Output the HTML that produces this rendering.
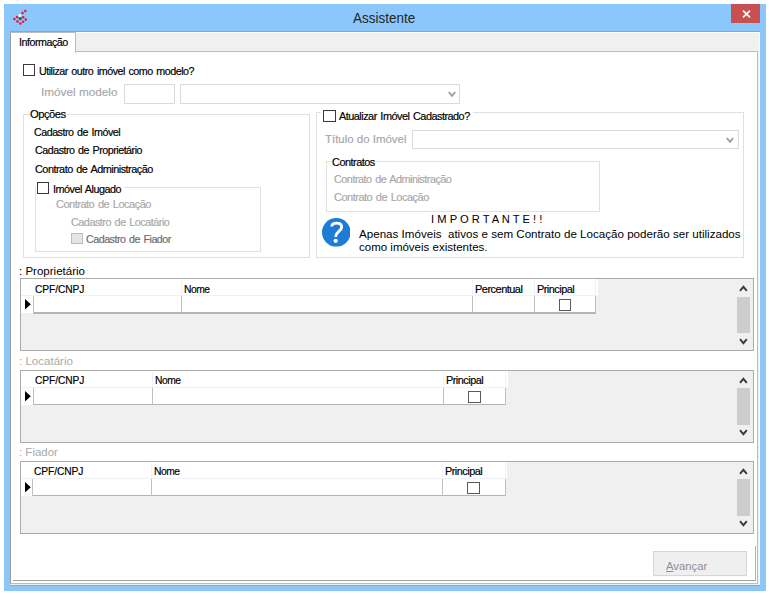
<!DOCTYPE html>
<html><head><meta charset="utf-8"><title>Assistente</title>
<style>
*{box-sizing:border-box;margin:0;padding:0}
html,body{width:771px;height:599px;background:#fff;overflow:hidden}
body{position:relative;font-family:"Liberation Sans",sans-serif;font-size:11px;color:#000}
.a{position:absolute}
.t{position:absolute;white-space:nowrap;transform-origin:0 50%}
.cb{position:absolute;width:12.3px;height:12.3px;border:1px solid #3a3a3a;background:#fff}
.grp{position:absolute;border:1px solid #e0e0e0}
.grid{position:absolute;border:1.2px solid #ababab;background:#f0f0f0}
u{text-decoration:underline}
</style></head><body>
<div class="a" style="left:4px;top:4px;width:762.2px;height:587.2px;background:#8cc7fb"></div>
<div class="a" style="left:731px;top:4px;width:29px;height:18.8px;background:#c75050"></div>
<svg class="a" style="left:741.7px;top:9.8px" width="9" height="8" viewBox="0 0 9 8"><path d="M1 0.6L8 7.4M8 0.6L1 7.4" stroke="#fff" stroke-width="1.7"/></svg>
<svg class="a" style="left:10px;top:9px" width="18" height="17" viewBox="0 0 18 17"><g fill="#ea1c2c"><circle cx="15.3" cy="2.0" r="1.3"/><circle cx="12.5" cy="4.0" r="1.3"/><circle cx="7.1" cy="8.1" r="1.3"/><circle cx="13.1" cy="8.2" r="1.3"/><circle cx="4.4" cy="10.1" r="1.3"/><circle cx="15.8" cy="10.6" r="1.3"/><circle cx="7.5" cy="12.4" r="1.3"/><circle cx="13.1" cy="12.7" r="1.3"/><circle cx="10.4" cy="14.5" r="1.3"/></g><circle cx="9.8" cy="6.4" r="1.5" fill="#fff"/><circle cx="10.2" cy="9.6" r="1.7" fill="#1f55a5"/></svg>
<div class="a" style="left:9.6px;top:31.4px;width:750.8px;height:554.2px;background:#7ea9da"></div>
<div class="a" style="left:10.4px;top:32.3px;width:749.3px;height:552.5px;background:#f0f0f0;border-top:1.7px solid #fff;border-right:1px solid #fff"></div>
<div class="a" style="left:10.2px;top:51.3px;width:748.3px;height:532.7px;background:#fff;border:1.2px solid #bcbcbc;border-left-color:#9c9c9c"></div>
<div class="a" style="left:13px;top:546px;width:743px;height:35px;border-right:1px solid #b0b0b0;border-bottom:1px solid #a0a0a0"></div>
<div class="a" style="left:10px;top:32px;width:66px;height:21px;background:#fff;border:1px solid #bcbcbc;border-left-color:#9c9c9c;border-bottom:none"></div>
<div class="cb" style="left:23.1px;top:63.9px;"></div>
<div class="a" style="left:124px;top:84px;width:51px;height:19.5px;border:1px solid #dadada;background:#fff"></div>
<div class="a" style="left:180px;top:84px;width:280px;height:19.5px;border:1px solid #dadada;background:#fff"></div>
<svg class="a" style="left:447.7px;top:91px" width="8" height="7" viewBox="0 0 8 7"><path d="M0.8 1L4 4.8L7.2 1" stroke="#9c9c9c" stroke-width="1.8" fill="none"/></svg>
<div class="grp" style="left:23px;top:114px;width:287px;height:144px"></div>
<div class="grp" style="left:34.5px;top:186.5px;width:226px;height:65px"></div>
<div class="a" style="left:36px;top:181px;width:88px;height:14px;background:#fff"></div>
<div class="cb" style="left:37px;top:182px;"></div>
<div class="cb" style="left:71.2px;top:232.8px;width:11.5px;height:11.5px;border-color:#bdbdbd;background:#e4e4e4;"></div>
<div class="grp" style="left:316px;top:112.3px;width:427.7px;height:145.9px"></div>
<div class="a" style="left:321px;top:108px;width:152px;height:14px;background:#fff"></div>
<div class="cb" style="left:323.3px;top:110px;width:12.3px;height:12px;"></div>
<div class="a" style="left:412px;top:130.2px;width:326.5px;height:19px;border:1px solid #dadada;background:#fff"></div>
<svg class="a" style="left:726.4px;top:136.7px" width="8" height="7" viewBox="0 0 8 7"><path d="M0.8 1L4 4.8L7.2 1" stroke="#9c9c9c" stroke-width="1.8" fill="none"/></svg>
<div class="grp" style="left:325.5px;top:161.3px;width:274px;height:51px"></div>
<svg class="a" style="left:321.5px;top:218.2px" width="28.6" height="28.6" viewBox="0 0 28 28"><circle cx="14" cy="14" r="14" fill="#1e7cd6"/><path d="M9.6 8.4C9.6 5.8 11.8 4.9 14.2 4.9C17.2 4.9 19.3 6.4 19.3 8.8C19.3 10.9 17.9 12 16.2 13.4C14.4 14.9 13.5 16 13.3 18.4" stroke="#fff" stroke-width="2.7" fill="none"/><circle cx="13.4" cy="22.3" r="2.1" fill="#fff"/></svg>
<div class="grid" style="left:20px;top:278.4px;width:734px;height:73px"></div><div class="a" style="left:21.0px;top:279.4px;width:576.8px;height:17px;background:#fff;border-bottom:1px solid #eef1f5"></div><div class="a" style="left:21.0px;top:296.4px;width:575.3px;height:17px;background:#fff"></div><div class="a" style="left:32.5px;top:312.4px;width:563.8px;height:1.2px;background:#b4b4b4"></div><div class="a" style="left:32.5px;top:296.4px;width:1.2px;height:17px;background:#c0c0c0"></div><div class="a" style="left:180.6px;top:280.4px;width:1px;height:15px;background:#eef1f5"></div><div class="a" style="left:180.6px;top:296.4px;width:1.2px;height:17px;background:#c0c0c0"></div><div class="a" style="left:471.5px;top:280.4px;width:1px;height:15px;background:#eef1f5"></div><div class="a" style="left:471.5px;top:296.4px;width:1.2px;height:17px;background:#c0c0c0"></div><div class="a" style="left:533.8px;top:280.4px;width:1px;height:15px;background:#eef1f5"></div><div class="a" style="left:533.8px;top:296.4px;width:1.2px;height:17px;background:#c0c0c0"></div><div class="a" style="left:595.3px;top:280.4px;width:1px;height:15px;background:#eef1f5"></div><div class="a" style="left:595.3px;top:296.4px;width:1.2px;height:17px;background:#c0c0c0"></div><svg class="a" style="left:25.0px;top:299.2px" width="6" height="10.5" viewBox="0 0 6 10.5"><path d="M0 0L5.8 5.25L0 10.5Z" fill="#000"/></svg><div class="cb" style="left:558.8499999999999px;top:299.0px;width:12.5px;height:12.3px;border-color:#5a5a5a"></div><div class="a" style="left:737.2px;top:296.59999999999997px;width:13px;height:36.4px;background:#cdcdcd"></div><svg class="a" style="left:739.2px;top:285.0px" width="9" height="7" viewBox="0 0 9 7"><path d="M1 5.8L4.4 1.8L7.8 5.8" stroke="#3a3a3a" stroke-width="1.9" fill="none"/></svg><svg class="a" style="left:739.2px;top:337.79999999999995px" width="9" height="7" viewBox="0 0 9 7"><path d="M1 1.2L4.4 5.2L7.8 1.2" stroke="#3a3a3a" stroke-width="1.9" fill="none"/></svg>
<div class="grid" style="left:20px;top:370px;width:734px;height:73px"></div><div class="a" style="left:21.0px;top:371px;width:486.5px;height:17px;background:#fff;border-bottom:1px solid #eef1f5"></div><div class="a" style="left:21.0px;top:388px;width:485.0px;height:17px;background:#fff"></div><div class="a" style="left:32.5px;top:404px;width:473.5px;height:1.2px;background:#b4b4b4"></div><div class="a" style="left:32.5px;top:388px;width:1.2px;height:17px;background:#c0c0c0"></div><div class="a" style="left:152.3px;top:372px;width:1px;height:15px;background:#eef1f5"></div><div class="a" style="left:152.3px;top:388px;width:1.2px;height:17px;background:#c0c0c0"></div><div class="a" style="left:443px;top:372px;width:1px;height:15px;background:#eef1f5"></div><div class="a" style="left:443px;top:388px;width:1.2px;height:17px;background:#c0c0c0"></div><div class="a" style="left:505px;top:372px;width:1px;height:15px;background:#eef1f5"></div><div class="a" style="left:505px;top:388px;width:1.2px;height:17px;background:#c0c0c0"></div><svg class="a" style="left:25.0px;top:390.8px" width="6" height="10.5" viewBox="0 0 6 10.5"><path d="M0 0L5.8 5.25L0 10.5Z" fill="#000"/></svg><div class="cb" style="left:468.3px;top:390.6px;width:12.5px;height:12.3px;border-color:#5a5a5a"></div><div class="a" style="left:737.2px;top:388.2px;width:13px;height:36.4px;background:#cdcdcd"></div><svg class="a" style="left:739.2px;top:376.6px" width="9" height="7" viewBox="0 0 9 7"><path d="M1 5.8L4.4 1.8L7.8 5.8" stroke="#3a3a3a" stroke-width="1.9" fill="none"/></svg><svg class="a" style="left:739.2px;top:429.4px" width="9" height="7" viewBox="0 0 9 7"><path d="M1 1.2L4.4 5.2L7.8 1.2" stroke="#3a3a3a" stroke-width="1.9" fill="none"/></svg>
<div class="grid" style="left:19.5px;top:461px;width:734px;height:73px"></div><div class="a" style="left:20.5px;top:462px;width:486.5px;height:17px;background:#fff;border-bottom:1px solid #eef1f5"></div><div class="a" style="left:20.5px;top:479px;width:485.0px;height:17px;background:#fff"></div><div class="a" style="left:32px;top:495px;width:473.5px;height:1.2px;background:#b4b4b4"></div><div class="a" style="left:32px;top:479px;width:1.2px;height:17px;background:#c0c0c0"></div><div class="a" style="left:151px;top:463px;width:1px;height:15px;background:#eef1f5"></div><div class="a" style="left:151px;top:479px;width:1.2px;height:17px;background:#c0c0c0"></div><div class="a" style="left:441.8px;top:463px;width:1px;height:15px;background:#eef1f5"></div><div class="a" style="left:441.8px;top:479px;width:1.2px;height:17px;background:#c0c0c0"></div><div class="a" style="left:504.5px;top:463px;width:1px;height:15px;background:#eef1f5"></div><div class="a" style="left:504.5px;top:479px;width:1.2px;height:17px;background:#c0c0c0"></div><svg class="a" style="left:24.5px;top:481.8px" width="6" height="10.5" viewBox="0 0 6 10.5"><path d="M0 0L5.8 5.25L0 10.5Z" fill="#000"/></svg><div class="cb" style="left:467.45px;top:481.6px;width:12.5px;height:12.3px;border-color:#5a5a5a"></div><div class="a" style="left:737.2px;top:479.2px;width:13px;height:36.4px;background:#cdcdcd"></div><svg class="a" style="left:739.2px;top:467.6px" width="9" height="7" viewBox="0 0 9 7"><path d="M1 5.8L4.4 1.8L7.8 5.8" stroke="#3a3a3a" stroke-width="1.9" fill="none"/></svg><svg class="a" style="left:739.2px;top:520.4px" width="9" height="7" viewBox="0 0 9 7"><path d="M1 1.2L4.4 5.2L7.8 1.2" stroke="#3a3a3a" stroke-width="1.9" fill="none"/></svg>
<div class="a" style="left:653px;top:551px;width:94px;height:25px;background:#efefef;border:1px solid #d5d5d5"></div>
<div class="t" id="t0" style="left:353.3px;top:9.23px;font-size:15.5px;line-height:18px;height:18px;color:#262626;transform:scaleX(0.8697);">Assistente</div>
<div class="t" id="t1" style="left:18.5px;top:34.61px;font-size:11.8px;line-height:14px;height:14px;color:#000;transform:scaleX(0.9100);letter-spacing:-0.55px;word-spacing:1.2px;-webkit-text-stroke:0.2px;">Informação</div>
<div class="t" id="t2" style="left:38.5px;top:63.61px;font-size:11.8px;line-height:14px;height:14px;color:#000;transform:scaleX(0.9099);letter-spacing:-0.55px;word-spacing:1.2px;-webkit-text-stroke:0.2px;">Utilizar outro imóvel como modelo?</div>
<div class="t" id="t3" style="left:41.1px;top:85.18px;font-size:11.6px;line-height:14px;height:14px;color:#a6a6a6;transform:scaleX(1.0145);-webkit-text-stroke:0.15px;">Imóvel modelo</div>
<div class="t" id="t4" style="left:29.9px;top:107.21px;font-size:11.8px;line-height:14px;height:14px;color:#000;transform:scaleX(0.9502);letter-spacing:-0.55px;word-spacing:1.2px;-webkit-text-stroke:0.2px;background:#fff;">Opções</div>
<div class="t" id="t5" style="left:34.3px;top:124.51px;font-size:11.8px;line-height:14px;height:14px;color:#000;transform:scaleX(0.9083);letter-spacing:-0.55px;word-spacing:1.2px;-webkit-text-stroke:0.2px;">Cadastro de Imóvel</div>
<div class="t" id="t6" style="left:35.0px;top:142.71px;font-size:11.8px;line-height:14px;height:14px;color:#000;transform:scaleX(0.9088);letter-spacing:-0.55px;word-spacing:1.2px;-webkit-text-stroke:0.2px;">Cadastro de Proprietário</div>
<div class="t" id="t7" style="left:35.0px;top:161.81px;font-size:11.8px;line-height:14px;height:14px;color:#000;transform:scaleX(0.9227);letter-spacing:-0.55px;word-spacing:1.2px;-webkit-text-stroke:0.2px;">Contrato de Administração</div>
<div class="t" id="t8" style="left:53.2px;top:181.71px;font-size:11.8px;line-height:14px;height:14px;color:#000;transform:scaleX(0.9168);letter-spacing:-0.55px;word-spacing:1.2px;-webkit-text-stroke:0.2px;">Imóvel Alugado</div>
<div class="t" id="t9" style="left:55.8px;top:197.31px;font-size:11.8px;line-height:14px;height:14px;color:#a9a9a9;transform:scaleX(0.9361);letter-spacing:-0.55px;word-spacing:1.2px;-webkit-text-stroke:0.2px;">Contrato de Locação</div>
<div class="t" id="t10" style="left:70.6px;top:214.91px;font-size:11.8px;line-height:14px;height:14px;color:#a9a9a9;transform:scaleX(0.9202);letter-spacing:-0.55px;word-spacing:1.2px;-webkit-text-stroke:0.2px;">Cadastro de Locatário</div>
<div class="t" id="t11" style="left:86.0px;top:232.41px;font-size:11.8px;line-height:14px;height:14px;color:#6d6d6d;transform:scaleX(0.9071);letter-spacing:-0.55px;word-spacing:1.2px;-webkit-text-stroke:0.2px;">Cadastro de Fiador</div>
<div class="t" id="t12" style="left:338.7px;top:109.41px;font-size:11.8px;line-height:14px;height:14px;color:#000;transform:scaleX(0.9220);letter-spacing:-0.55px;word-spacing:1.2px;-webkit-text-stroke:0.2px;">Atualizar Imóvel Cadastrado?</div>
<div class="t" id="t13" style="left:324.8px;top:131.58px;font-size:11.6px;line-height:14px;height:14px;color:#a6a6a6;transform:scaleX(0.9881);-webkit-text-stroke:0.15px;">Título do Imóvel</div>
<div class="t" id="t14" style="left:332.4px;top:154.91px;font-size:11.8px;line-height:14px;height:14px;color:#000;transform:scaleX(0.9263);letter-spacing:-0.55px;word-spacing:1.2px;-webkit-text-stroke:0.2px;background:#fff;">Contratos</div>
<div class="t" id="t15" style="left:333.9px;top:172.11px;font-size:11.8px;line-height:14px;height:14px;color:#a9a9a9;transform:scaleX(0.9195);letter-spacing:-0.55px;word-spacing:1.2px;-webkit-text-stroke:0.2px;">Contrato de Administração</div>
<div class="t" id="t16" style="left:333.9px;top:189.91px;font-size:11.8px;line-height:14px;height:14px;color:#a9a9a9;transform:scaleX(0.9341);letter-spacing:-0.55px;word-spacing:1.2px;-webkit-text-stroke:0.2px;">Contrato de Locação</div>
<div class="t" id="t17" style="left:430.8px;top:211.68px;font-size:11.6px;line-height:14px;height:14px;color:#000;transform:scaleX(0.9640);">I M P O R T A N T E ! !</div>
<div class="t" id="t18" style="left:358.6px;top:227.28px;font-size:11.6px;line-height:14px;height:14px;color:#000;transform:scaleX(1.0002);">Apenas Imóveis  ativos e sem Contrato de Locação poderão ser utilizados</div>
<div class="t" id="t19" style="left:358.6px;top:239.98px;font-size:11.6px;line-height:14px;height:14px;color:#000;transform:scaleX(0.9922);">como imóveis existentes.</div>
<div class="t" id="t20" style="left:19.3px;top:264.18px;font-size:11.6px;line-height:14px;height:14px;color:#000;transform:scaleX(0.9944);">: Proprietário</div>
<div class="t" id="t21" style="left:19.3px;top:354.18px;font-size:11.6px;line-height:14px;height:14px;color:#a9a9a9;transform:scaleX(0.9956);">: Locatário</div>
<div class="t" id="t22" style="left:19.3px;top:444.68px;font-size:11.6px;line-height:14px;height:14px;color:#a9a9a9;transform:scaleX(0.9895);">: Fiador</div>
<div class="t" id="t23" style="left:34.9px;top:281.81px;font-size:11.8px;line-height:14px;height:14px;color:#000;transform:scaleX(0.8666);letter-spacing:-0.55px;word-spacing:1.2px;-webkit-text-stroke:0.2px;letter-spacing:-0.1px;">CPF/CNPJ</div>
<div class="t" id="t24" style="left:183.7px;top:281.81px;font-size:11.8px;line-height:14px;height:14px;color:#000;transform:scaleX(0.8743);letter-spacing:-0.55px;word-spacing:1.2px;-webkit-text-stroke:0.2px;">Nome</div>
<div class="t" id="t25" style="left:474.6px;top:281.81px;font-size:11.8px;line-height:14px;height:14px;color:#000;transform:scaleX(0.9311);letter-spacing:-0.55px;word-spacing:1.2px;-webkit-text-stroke:0.2px;">Percentual</div>
<div class="t" id="t26" style="left:536.9px;top:281.81px;font-size:11.8px;line-height:14px;height:14px;color:#000;transform:scaleX(0.9231);letter-spacing:-0.55px;word-spacing:1.2px;-webkit-text-stroke:0.2px;">Principal</div>
<div class="t" id="t27" style="left:34.9px;top:373.31px;font-size:11.8px;line-height:14px;height:14px;color:#000;transform:scaleX(0.8666);letter-spacing:-0.55px;word-spacing:1.2px;-webkit-text-stroke:0.2px;letter-spacing:-0.1px;">CPF/CNPJ</div>
<div class="t" id="t28" style="left:155.0px;top:373.31px;font-size:11.8px;line-height:14px;height:14px;color:#000;transform:scaleX(0.8743);letter-spacing:-0.55px;word-spacing:1.2px;-webkit-text-stroke:0.2px;">Nome</div>
<div class="t" id="t29" style="left:446.0px;top:373.31px;font-size:11.8px;line-height:14px;height:14px;color:#000;transform:scaleX(0.9231);letter-spacing:-0.55px;word-spacing:1.2px;-webkit-text-stroke:0.2px;">Principal</div>
<div class="t" id="t30" style="left:34.0px;top:464.41px;font-size:11.8px;line-height:14px;height:14px;color:#000;transform:scaleX(0.8666);letter-spacing:-0.55px;word-spacing:1.2px;-webkit-text-stroke:0.2px;letter-spacing:-0.1px;">CPF/CNPJ</div>
<div class="t" id="t31" style="left:153.8px;top:464.41px;font-size:11.8px;line-height:14px;height:14px;color:#000;transform:scaleX(0.8743);letter-spacing:-0.55px;word-spacing:1.2px;-webkit-text-stroke:0.2px;">Nome</div>
<div class="t" id="t32" style="left:445.0px;top:464.41px;font-size:11.8px;line-height:14px;height:14px;color:#000;transform:scaleX(0.9231);letter-spacing:-0.55px;word-spacing:1.2px;-webkit-text-stroke:0.2px;">Principal</div>
<div class="t" id="t33" style="left:666.0px;top:558.75px;font-size:11.7px;line-height:14px;height:14px;color:#8e8e8e;transform:scaleX(0.9652);"><u>A</u>vançar</div>
</body></html>
